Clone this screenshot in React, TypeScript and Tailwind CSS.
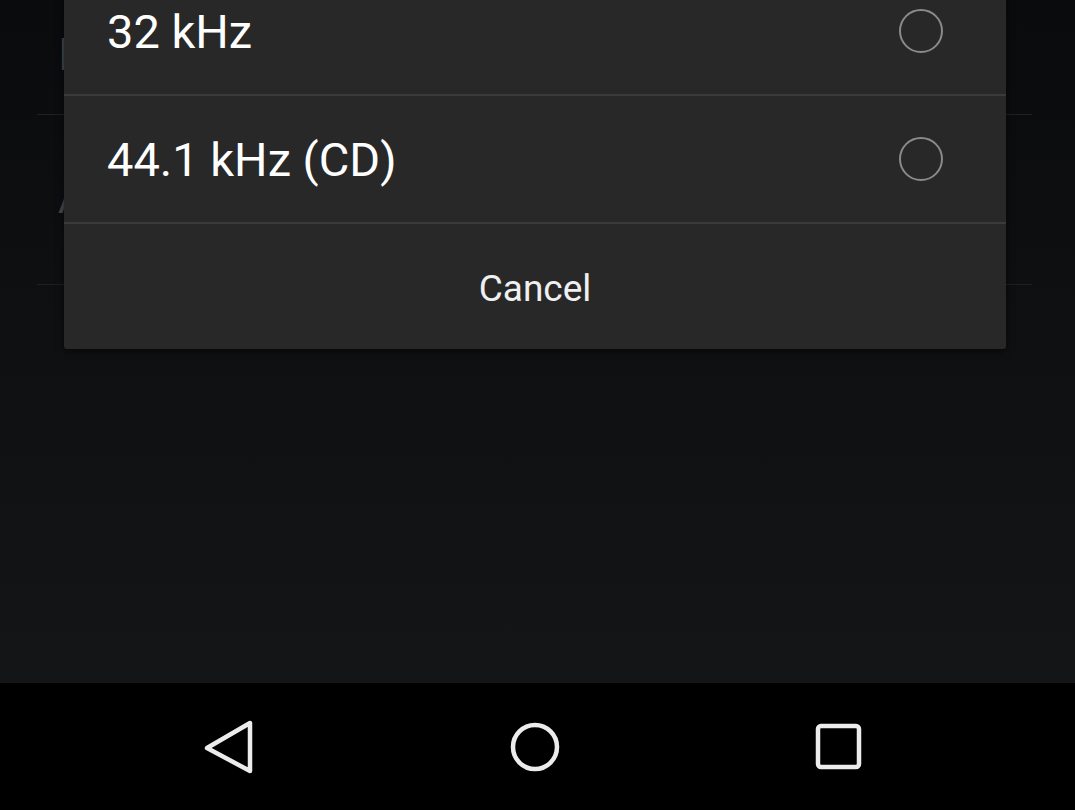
import React from "react";

function Radio() {
  return (
    <div className="w-[44px] h-[44px] rounded-full border-2 border-[#8a8a8a] box-border" />
  );
}

export default function App() {
  return (
    <div
      className="relative w-[1075px] h-[810px] overflow-hidden flex flex-col bg-black"
      style={{ fontFamily: "Roboto, 'Noto Sans', sans-serif" }}
    >
      {/* dimmed background screen */}
      <div className="h-[683px] bg-gradient-to-b from-[#0a0b0d] to-[#141517] flex flex-col">
        <div className="ml-[37px] mr-[43px] h-[115px] border-b border-[#1f2022] flex items-center pl-[21px]">
          <span className="text-[#4a4b4d] text-[44px] -mt-[4px]">I</span>
        </div>
        <div className="ml-[37px] mr-[43px] h-[170px] border-b border-[#1f2022] flex items-center pl-[21px]">
          <span className="text-[#4a4b4d] text-[40px]">A</span>
        </div>
      </div>

      {/* nav bar */}
      <div className="h-[127px] bg-black flex items-center pl-[200px]">
        <svg width="56" height="56" viewBox="0 0 56 56" className="mt-[1px]">
          <path
            d="M50 4 L50 52 L7 29 Z"
            fill="none"
            stroke="#ececec"
            strokeWidth="4.5"
            strokeLinejoin="round"
          />
        </svg>
        <svg width="52" height="52" viewBox="0 0 52 52" className="ml-[253px]">
          <circle cx="26" cy="26" r="22" fill="none" stroke="#ececec" strokeWidth="4.5" />
        </svg>
        <svg width="48" height="48" viewBox="0 0 48 48" className="ml-[254px]">
          <rect x="3" y="3" width="41" height="41" rx="3" fill="none" stroke="#ececec" strokeWidth="4.5" />
        </svg>
      </div>

      {/* dialog */}
      <div className="absolute left-[64px] top-[-32px] w-[942px] bg-[#282828] rounded-b-[3px] shadow-[0_2px_8px_rgba(0,0,0,0.6)] flex flex-col">
        <div className="h-[128px] border-b-2 border-[#3a3a3a] flex items-center justify-between pl-[43px] pr-[63px]">
          <span className="text-white text-[47px] leading-none">32 kHz</span>
          <Radio />
        </div>
        <div className="h-[128px] border-b-2 border-[#3a3a3a] flex items-center justify-between pl-[43px] pr-[63px]">
          <span className="text-white text-[47px] leading-none">44.1 kHz (CD)</span>
          <Radio />
        </div>
        <div className="h-[125px] flex items-center justify-center pt-[3px]">
          <span className="text-[#f0f0f0] text-[37px] leading-none">Cancel</span>
        </div>
      </div>
    </div>
  );
}
